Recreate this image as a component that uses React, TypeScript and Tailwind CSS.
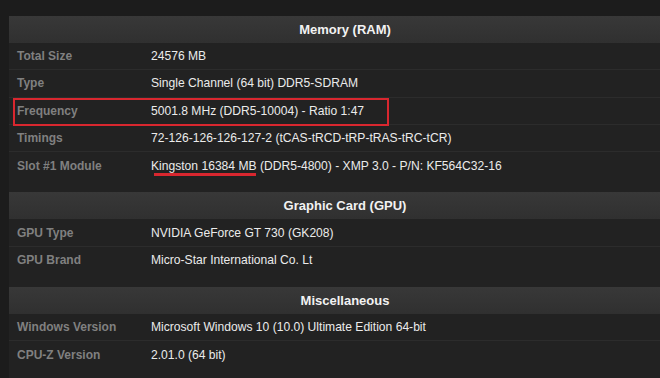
import React from "react";

type Row = { label: string; value: React.ReactNode; box?: boolean };

const font = { fontFamily: '"Liberation Sans", Arial, sans-serif' };

function Section({ title, rows }: { title: string; rows: Row[] }) {
  return (
    <div className="pb-[13px]">
      <div className="h-[27px] flex items-center justify-center bg-gradient-to-b from-[#383838] to-[#303030] text-[13px] font-bold text-[#f2f2f2]">
        {title}
      </div>
      {rows.map((r, i) => (
        <div
          key={r.label}
          className={
            "relative h-[27.3px] flex items-center " +
            (i < rows.length - 1 ? "border-b border-[#2c2c2c]" : "")
          }
        >
          <div className="w-[142px] pl-[8px] text-[12px] font-bold text-[#808080]">
            {r.label}
          </div>
          <div className="text-[12.1px] text-[#ebebeb]">{r.value}</div>
          {r.box && (
            <div className="absolute left-[4px] top-[0px] w-[376px] h-[28px] border-2 border-[#d9272f]" />
          )}
        </div>
      ))}
    </div>
  );
}

export default function App() {
  return (
    <div
      className="w-[660px] h-[378px] overflow-hidden bg-[#1c1c1c] pt-[16px] pl-[9px]"
      style={font}
    >
      <div className="w-[672px] bg-[#222222]">
        <Section
          title="Memory (RAM)"
          rows={[
            { label: "Total Size", value: "24576 MB" },
            { label: "Type", value: "Single Channel (64 bit) DDR5-SDRAM" },
            {
              label: "Frequency",
              value: "5001.8 MHz (DDR5-10004) - Ratio 1:47",
              box: true,
            },
            {
              label: "Timings",
              value: "72-126-126-126-127-2 (tCAS-tRCD-tRP-tRAS-tRC-tCR)",
            },
            {
              label: "Slot #1 Module",
              value: (
                <span>
                  <span className="relative">
                    Kingston 16384 MB
                    <span className="absolute left-[3px] right-[1px] bottom-[-3px] h-[3px] bg-[#d9272f]" />
                  </span>{" "}
                  (DDR5-4800) - XMP 3.0 - P/N: KF564C32-16
                </span>
              ),
            },
          ]}
        />
        <Section
          title="Graphic Card (GPU)"
          rows={[
            { label: "GPU Type", value: "NVIDIA GeForce GT 730 (GK208)" },
            { label: "GPU Brand", value: "Micro-Star International Co. Lt" },
          ]}
        />
        <Section
          title="Miscellaneous"
          rows={[
            {
              label: "Windows Version",
              value: "Microsoft Windows 10 (10.0) Ultimate Edition 64-bit",
            },
            { label: "CPU-Z Version", value: "2.01.0 (64 bit)" },
          ]}
        />
      </div>
    </div>
  );
}
